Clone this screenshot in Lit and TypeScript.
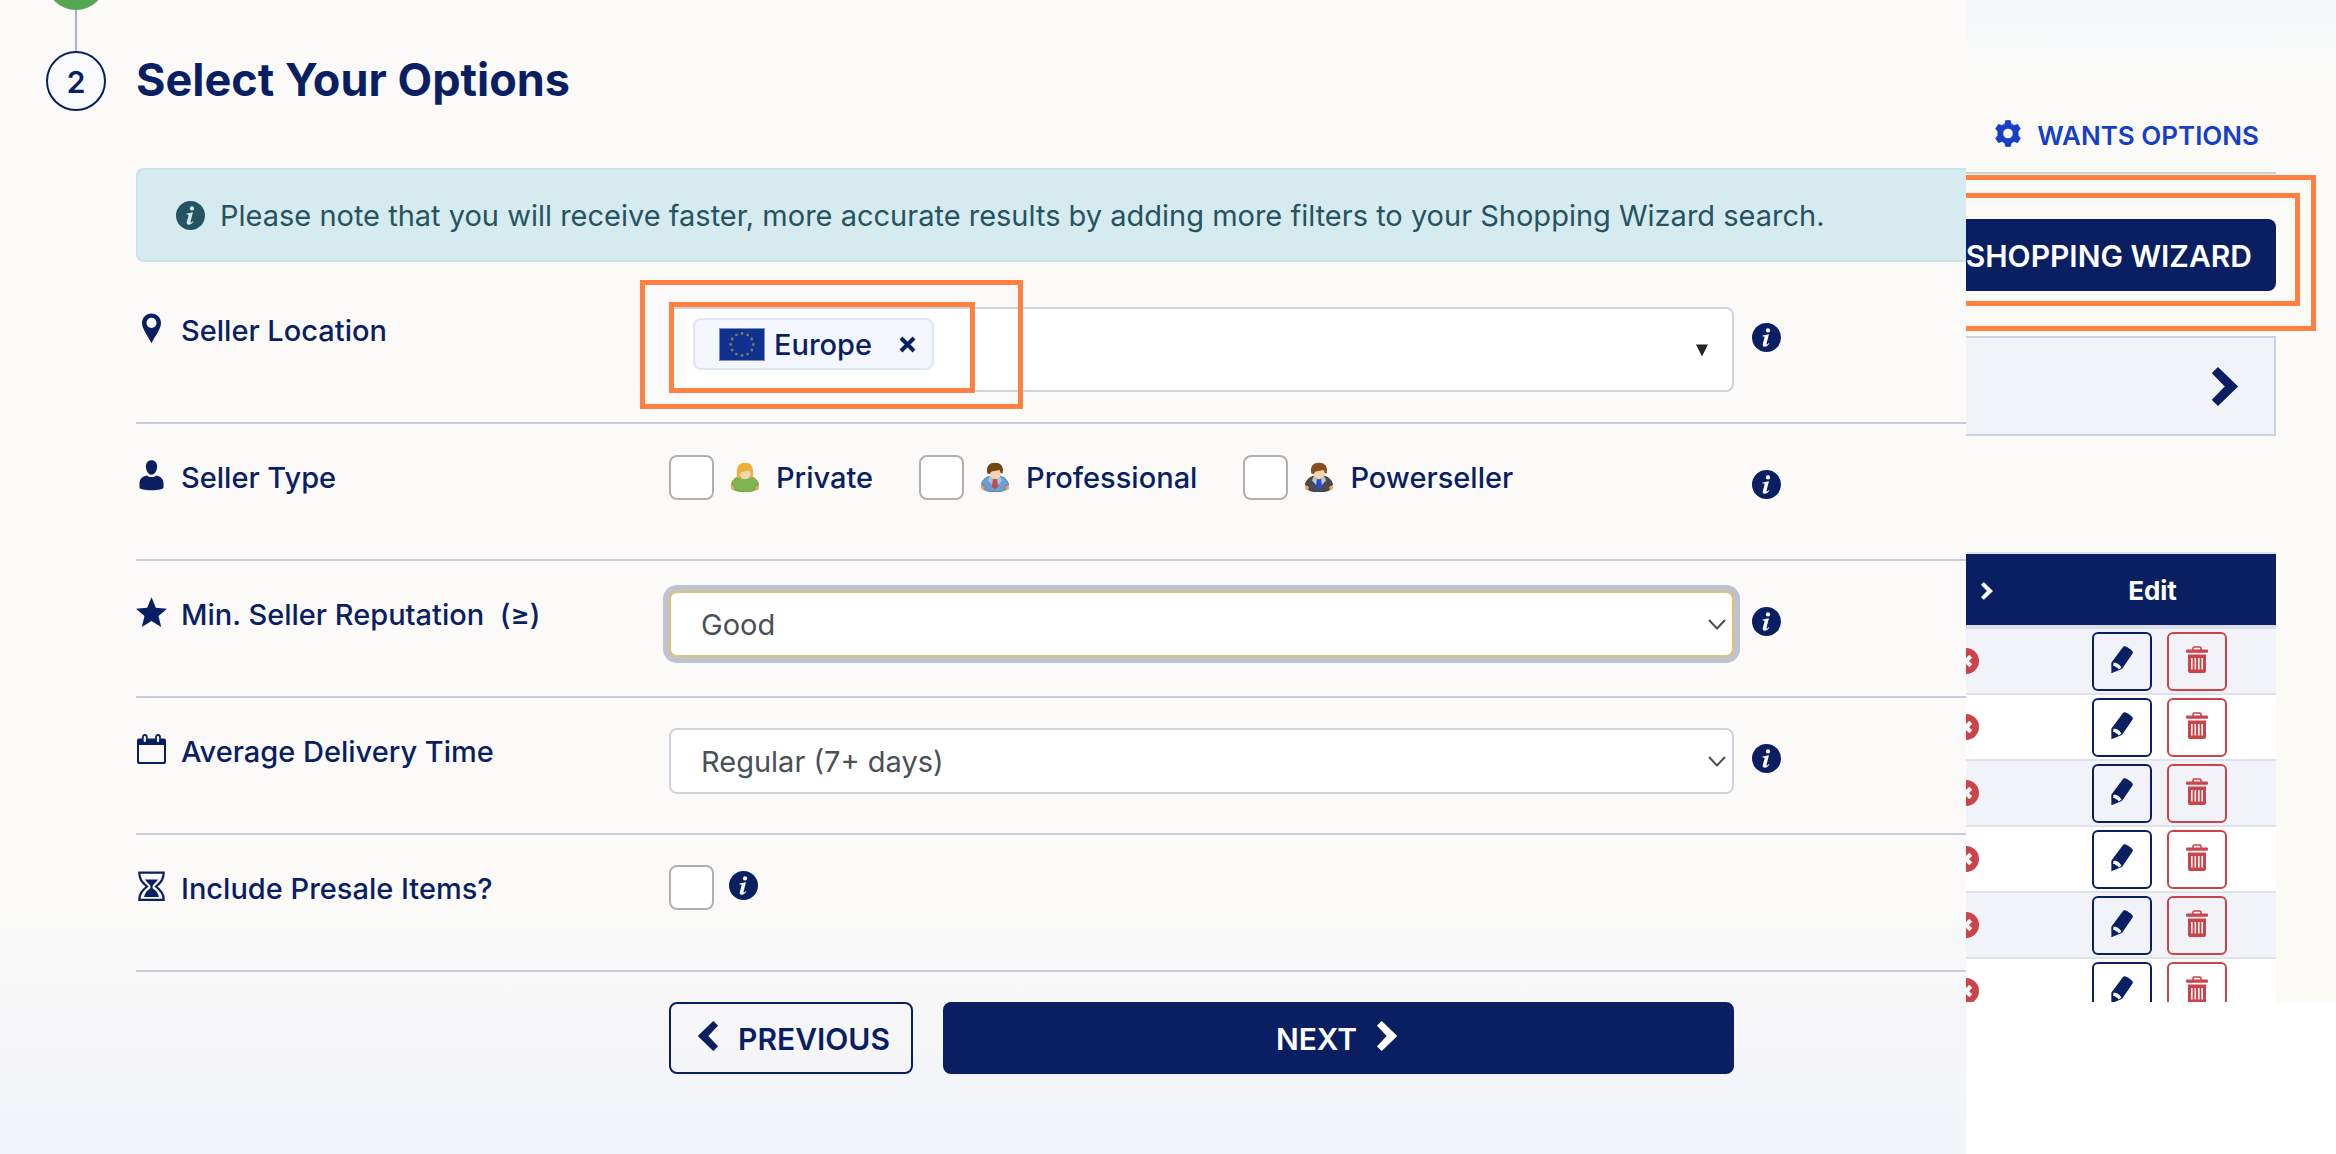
import { LitElement, html, svg, css, nothing } from "lit";
import { customElement, state } from "lit/decorators.js";

const NAVY = "#0a1f62";

const infoIcon = (size = 29) => html`<svg class="icon" width=${size} height=${size} viewBox="0 0 29 29" aria-hidden="true">
  <circle cx="14.5" cy="14.5" r="14.5" fill="currentColor"></circle>
  <circle cx="16" cy="7.4" r="2.1" fill="var(--hole, #fff)"></circle>
  <path d="M10.6 12.4c1.9-.2 3.8-.7 5.8-1.2l.5.4-2.4 9.1c-.2.8.1 1 .5.8.7-.4 1.2-.9 1.8-1.6l.6.5c-1.2 1.7-2.7 3.3-4.7 3.3-1.6 0-2.3-1.1-1.9-2.7l1.7-6.3c.2-.9 0-1.2-.8-1.2h-1.2z" fill="var(--hole, #fff)"></path>
</svg>`;

const chevron = (dir: "left" | "right", w: number, h: number) => html`<svg class="icon" width=${w} height=${h} viewBox="0 0 20 30" aria-hidden="true">
  <path d=${dir === "right" ? "M4.6 .8 L19.3 15 L4.6 29.2 L.7 25.3 L10.6 15 L.7 4.7 Z" : "M15.4 .8 L.7 15 L15.4 29.2 L19.3 25.3 L9.4 15 L19.3 4.7 Z"} fill="currentColor" stroke="currentColor" stroke-width="1.2" stroke-linejoin="round"></path>
</svg>`;

const rowIcons = {
  pin: html`<svg class="icon" width="31" height="31" viewBox="0 0 31 31" aria-hidden="true"><path fill-rule="evenodd" fill="currentColor" d="M15.500 .5c5.300 0 9.500 4.100 9.500 9.400 0 6.300-6.300 13.400-9.500 20.300C12.300 23.300 6 16.200 6 9.900 6 4.600 10.200 .5 15.500 .5zm0 4.300a5 5 0 1 0 0 10.100 5 5 0 0 0 0-10.100z"></path></svg>`,
  user: html`<svg class="icon" width="31" height="31" viewBox="0 0 31 31" aria-hidden="true"><path fill="currentColor" d="M15.500 .3c3.500 0 5.600 2.500 5.600 6.300 0 3.600-2.100 8.200-5.600 8.200S9.900 10.200 9.900 6.600C9.900 2.800 12 .3 15.500 .3z"></path><path fill="currentColor" d="M10.800 15.400c1.300 1 2.900 1.600 4.700 1.600s3.400-.6 4.700-1.600c4.700.9 7.300 3.500 7.300 8v4.100c0 1.700-5.400 2.700-12 2.700s-12-1-12-2.700v-4.100c0-4.500 2.600-7.100 7.300-8z"></path></svg>`,
  star: html`<svg class="icon" width="31" height="31" viewBox="0 0 31 31" aria-hidden="true"><path fill="currentColor" d="M15.500 .3l4.300 10.500 11.200.9-8.500 7.300 2.700 11-9.700-5.900-9.700 5.900 2.700-11L0 11.700l11.200-.9z"></path></svg>`,
  calendar: html`<svg class="icon" width="31" height="31" viewBox="0 0 31 31" aria-hidden="true"><path fill-rule="evenodd" fill="currentColor" d="M3 4.500h25a2 2 0 0 1 2 2V28a2 2 0 0 1-2 2H3a2 2 0 0 1-2-2V6.500a2 2 0 0 1 2-2zM3 11v16.300c0 .5.300.8.800.8h23.400c.5 0 .8-.3.800-.8V11z"></path><rect x="6.800" y="1" width="4" height="8" rx="2" fill="#fbfaf7" stroke="currentColor" stroke-width="1.800"></rect><rect x="20" y="1" width="4" height="8" rx="2" fill="#fbfaf7" stroke="currentColor" stroke-width="1.800"></rect></svg>`,
  hourglass: html`<svg class="icon" width="31" height="31" viewBox="0 0 31 31" aria-hidden="true"><path fill="none" stroke="currentColor" stroke-width="2.200" d="M3.300 1.600h24.400c0 6.500-2.500 9.500-7.700 13.900 5.200 4.400 7.700 7.400 7.700 13.400H3.300c0-6 2.500-9 7.700-13.400C5.800 11.100 3.300 8.100 3.300 1.600z"></path><path fill="currentColor" d="M9 8.500h13c-1 2-4.200 4.500-5.400 6.200v2.600c3.300 2.200 5.600 4.500 6.400 8.700H8c.8-4.200 3.100-6.500 6.400-8.700v-2.600C13.200 13 10 10.500 9 8.500z"></path></svg>`,
};

interface PersonLook { hair: string; body: string; edge: string; tie?: string; lapel?: string; long?: boolean }

const person = (p: PersonLook) => html`<svg class="icon" width="30" height="30" viewBox="0 0 30 30" aria-hidden="true">
  <path d="M4.500 18.500C1.500 20 .3 23.500 1 26c.6 2 2.500 2.800 4.500 2.500l2-5z" fill="#e9a765"></path>
  <path d="M25.500 18.500c3 1.500 4.200 5 3.500 7.500-.6 2-2.500 2.800-4.500 2.500l-2-5z" fill="#e9a765"></path>
  <path d="M9 14.500h12c4 1 6.800 4 7.500 8l-4 2 .8 3.200c-1.500 1.500-5.500 2-10.300 2s-8.800-.5-10.300-2l.8-3.200-4-2c.7-4 3.500-7 7.500-8z" fill=${p.body} stroke=${p.edge} stroke-width="1"></path>
  ${p.lapel ? svg`<path d="M9.500 14.500L15 19l5.500-4.500 1.500 4-4.500 5h-5l-4.500-5z" fill=${p.lapel}></path>` : nothing}
  ${p.tie ? svg`<path d="M13 16.500h4l1.200 8.500-3.200 2-3.200-2z" fill=${p.tie}></path>` : nothing}
  <ellipse cx="15" cy="11" rx="6.200" ry="6.200" fill="#f6d5ae"></ellipse>
  <path d=${p.long ? "M7 15.500C6 4 9 .8 15 .8s9 3.200 8 14.700l-2.700.5c.4-3.500 0-6-1.300-7.500l-7.500 1.500C10 11.500 9.500 13 9.700 16z" : "M7.300 11.500C6 4 9.300 .8 15 .8s9 3.200 7.700 10.700l-2-.5-1-3-8 1.500L9.500 12z"} fill=${p.hair}></path>
</svg>`;

const looks: Record<string, PersonLook> = {
  Private: { hair: "#eeb03c", body: "#7fb54e", edge: "#6fa045", long: true },
  Professional: { hair: "#744519", body: "#6d9ed3", edge: "#5581b5", tie: "#c64a45", lapel: "#a5c6ea" },
  Powerseller: { hair: "#8a4d1c", body: "#4a4b50", edge: "#38393e", tie: "#2450d8", lapel: "#c3c6cf" },
};

const euFlag = html`<svg class="icon" width="46" height="33" viewBox="0 0 46 33" aria-hidden="true">
  <rect width="46" height="33" fill="#7d8fc6"></rect>
  <rect x="1" y="1" width="44" height="31" fill="#11308f"></rect>
  ${Array.from({ length: 12 }, (_, i) => {
    const a = (i * Math.PI) / 6;
    return svg`<circle cx=${23 + 11.3 * Math.sin(a)} cy=${16.5 - 11 * Math.cos(a)} r="1.400" fill="#7b8057"></circle>`;
  })}
</svg>`;

const gear = html`<svg class="icon" width="26" height="27" viewBox="0 0 26 27" aria-hidden="true">
  <path fill-rule="evenodd" fill="currentColor" stroke="currentColor" stroke-width=".8" stroke-linejoin="round" d="M10.700 .6h4.600l.9 3.400 2.700 1.500 3.700-1.100 2.700 4.300-2.200 2.900v3.800l2.200 2.900-2.700 4.300-3.700-1.100-2.700 1.500-.9 3.400h-4.600l-.9-3.400-2.700-1.500-3.700 1.100L.7 18.300l2.200-2.900v-3.800L.7 8.700l2.700-4.300 3.700 1.100L9.800 4zM13 8.300a5.200 5.200 0 1 0 0 10.400 5.200 5.200 0 0 0 0-10.400z"></path>
</svg>`;

const pencil = html`<svg class="icon" width="22" height="28" viewBox="0 0 22 28" aria-hidden="true">
  <path fill="currentColor" d="M11.800 1.200c.7-1 1.700-1.200 2.800-.7 2.600 1 4.800 2.500 6.600 4.500.8.900.9 1.800.2 2.800L11.500 22.300c-.3.500-.8.800-1.300 1L.4 27.300 .3 17.500c0-.6.2-1 .5-1.500z"></path>
  <path fill="var(--cell, #fff)" d="M2.400 16.700c3.400-.5 6.900 1.900 8 5.100l-2.900 1.700c-.4-1.500-1-1.900-2.300-1.900-.5-1.200-1.500-1.800-3-1.700z"></path>
</svg>`;

const trash = html`<svg class="icon" width="22" height="27" viewBox="0 0 22 27" aria-hidden="true">
  <path fill="none" stroke="currentColor" stroke-width="1.600" d="M7 4V2.200c0-.8.400-1.200 1.200-1.200h5.600c.8 0 1.200.4 1.200 1.200V4"></path>
  <rect x="0" y="3.500" width="22" height="3.300" rx="1" fill="currentColor"></rect>
  <path fill-rule="evenodd" fill="currentColor" d="M2 8.500h18V25a2 2 0 0 1-2 2H4a2 2 0 0 1-2-2zM5 12v11.500h1.600V12zm3.500 0v11.500h1.600V12zm3.500 0v11.500h1.600V12zm3.400 0v11.500H17V12z"></path>
</svg>`;

const crossBadge = html`<svg class="icon" width="26" height="26" viewBox="0 0 26 26" aria-hidden="true">
  <circle cx="13" cy="13" r="13" fill="#cb444a"></circle>
  <path d="M8.200 8.200l9.600 9.600M17.800 8.200l-9.600 9.600" stroke="var(--cell, #fff)" stroke-width="4.200"></path>
</svg>`;

@customElement("app-root")
export class AppRoot extends LitElement {
  @state() private regions = ["Europe"];

  static styles = css`
    :host {
      display: grid;
      grid-template-columns: minmax(0, 1fr) 370px;
      min-height: 100vh;
      background: #fff;
      color: #0a1f62;
      font-family: Inter, "Liberation Sans", sans-serif;
      font-size: 29px;
      line-height: 44px;
      overflow: hidden;
    }
    * { box-sizing: border-box; }
    h2, p { margin: 0; }
    button, select, input { font: inherit; color: inherit; margin: 0; }
    button { cursor: pointer; }
    a { color: inherit; text-decoration: none; }
    .icon { display: block; flex: none; }

    .wizard {
      display: grid;
      grid-template-columns: 60px minmax(0, 1fr);
      column-gap: 30px;
      padding-left: 46px;
      background: linear-gradient(#fbfaf8 0, #fbfaf8 76%, #f3f4f9 97%);
      overflow: hidden;
    }
    .steps { display: flex; flex-direction: column; align-items: center; }
    .done { width: 60px; height: 10px; overflow: hidden; display: flex; align-items: flex-end; }
    .done::after { content: ""; width: 60px; height: 60px; flex: none; border-radius: 50%; background: #55a651; }
    .track { width: 2px; height: 41px; background: #adb3bf; }
    .step {
      width: 60px; height: 60px; padding-top: 2px; border: 2px solid #0a1f62; border-radius: 50%;
      background: #f8f9fd; display: flex; align-items: center; justify-content: center;
      font-size: 30px; font-weight: 600;
    }
    h2 { padding-top: 50px; font-size: 45px; line-height: 60px; font-weight: 700; }
    .note {
      display: flex; align-items: center; gap: 15px;
      margin: 58px 0 15px; height: 94px; padding: 0 38px;
      border: 2px solid #c3e5eb; border-right: 0; border-radius: 8px 0 0 8px;
      background: #d6ebef; color: #255361; --hole: #d6ebef;
      white-space: nowrap;
    }
    .note p { padding-top: 2px; }
    .row {
      display: grid;
      grid-template-columns: 533fr 1065fr 232fr;
      align-items: start;
      min-height: 137px;
      padding-top: 30px;
      border-bottom: 2px solid #c9cddb;
    }
    .row.tall { min-height: 147px; }
    .label { display: flex; align-items: center; gap: 14px; font-weight: 500; white-space: pre; }
    .label span { padding-top: 2px; }
    .label .icon { margin-bottom: 4px; }
    .info { display: flex; padding: 16px 0 0 18px; background: none; border: 0; }
    .control { position: relative; min-width: 0; }

    .multi {
      display: flex; align-items: flex-start; justify-content: space-between;
      height: 85px; padding: 9px 24px 0 22px;
      border: 2px solid #ced2dc; border-radius: 8px; background: #fff;
    }
    .tag {
      display: flex; align-items: center; height: 52px; padding: 0 16px 0 24px; gap: 9px;
      border: 2px solid #dfe6fc; border-radius: 8px; background: #f4f6fe; font-weight: 500;
    }
    .tag span { padding-top: 2px; }
    .remove { display: flex; padding: 0; margin-left: 18px; background: none; border: 0; }
    .open { display: flex; padding: 26px 0 0; background: none; border: 0; }
    .mark { position: absolute; border: 5px solid #ff8040; pointer-events: none; }
    .mark.outer { left: -29px; top: -27px; width: 383px; height: 129px; }
    .mark.inner { left: 0; top: -5px; width: 306px; height: 91px; }

    .checks { display: flex; align-items: center; gap: 46px; font-weight: 500; }
    .check { display: flex; align-items: center; gap: 16px; }
    .check span { padding-top: 2px; }
    .box {
      appearance: none; display: block; width: 45px; height: 45px; flex: none;
      border: 2px solid #b0b0b0; border-radius: 8px; background: #fff;
    }
    .checks .info { padding: 0; margin: -4px 0 0 -31px; }

    .select { position: relative; display: flex; align-items: center; }
    .select select {
      appearance: none; width: 100%; height: 66px; padding: 2px 60px 0 30px;
      border: 2px solid #ced4da; border-radius: 8px; background: #fff; color: #495057;
      outline: 0;
    }
    .select.active select { border-color: #dcc56f; box-shadow: 0 0 0 6px #bfc2d1; }
    .select .icon { position: absolute; right: 8px; pointer-events: none; }

    .actions {
      display: grid; grid-template-columns: 533fr 1065fr 232fr; padding: 30px 0 80px;
    }
    .buttons { grid-column: 2; display: flex; gap: 30px; }
    .btn {
      display: flex; align-items: center; justify-content: center; gap: 20px;
      height: 72px; border: 2px solid #0a1f62; border-radius: 8px;
      background: #0a1f62; color: #fff; font-size: 30px; font-weight: 600; white-space: nowrap;
    }
    .btn span { padding-top: 2px; }
    .btn .icon { margin-bottom: 4px; }
    .btn.ghost { width: 244px; padding: 0 20px 0 26px; background: transparent; color: #0a1f62; }
    .btn.grow { flex: 1; padding: 0 10px 0 6px; }

    .side {
      position: relative; height: calc(100vh - 152px); overflow: hidden;
      background: linear-gradient(#f4f6fa 0, #f8f9f9 50px, #fbfaf7 95px);
    }
    .inner-side { width: 310px; display: flex; flex-direction: column; }
    .wants {
      display: flex; align-items: flex-start; justify-content: flex-end; gap: 16px;
      height: 174px; padding: 98px 17px 0 0; border-bottom: 2px solid #c9cddb;
      color: #173fc6; font-size: 26px; font-weight: 600; white-space: nowrap;
      line-height: 40px;
    }
    .wants .icon { margin-top: 22px; }
    .wants span { margin-top: 18px; }
    .side .btn { margin-top: 45px; justify-content: flex-end; padding: 0 22px 0 0; border-radius: 0 8px 8px 0; border-left: 0; }
    .panel {
      display: flex; align-items: center; justify-content: flex-end;
      height: 100px; margin: 45px 0 116px; padding-right: 36px;
      border: 2px solid #cdd2e0; border-left: 0; background: #f2f3f8; color: #0a1f62;
      border-radius: 0;
    }
    .frame { position: absolute; left: -5px; border: 5px solid #ff8040; pointer-events: none; }
    .frame.a { top: 175px; right: 20px; height: 156px; }
    .frame.b { top: 193px; right: 36px; height: 113px; }

    table { width: 100%; border-collapse: separate; border-spacing: 0; table-layout: fixed; }
    th, td { padding: 0; }
    th {
      height: 77px; padding-top: 2px; border-top: 2px solid #dfe1e8; border-bottom: 4px solid #dcdee6;
      background: #0a1f62; color: #fff; font-size: 26px; font-weight: 700; text-align: center;
    }
    .status { width: 63px; }
    th .icon { margin-left: 15px; }
    td { height: 66px; border-bottom: 2px solid #dfe2e8; background: var(--cell); }
    tr { --cell: #fff; }
    tbody tr:nth-child(odd) { --cell: #f2f3f8; }
    td .icon { margin-left: -13px; }
    .tools { display: flex; gap: 15px; padding: 3px 0 2px 63px; }
    .tool {
      display: flex; align-items: center; justify-content: center;
      width: 60px; height: 59px; padding: 0 0 4px; border: 2px solid currentColor; border-radius: 6px;
      background: transparent;
    }
    .tool .icon { margin: 0; }
    .tool.del { color: #cb444a; }
  `;

  private info(topic: string) {
    return html`<button class="info" type="button" aria-label="About ${topic}">${infoIcon()}</button>`;
  }

  private select(id: string, value: string, active = false) {
    return html`<div class="control select ${active ? "active" : ""}">
      <select id=${id}><option>${value}</option></select>
      <svg class="icon" width="18" height="11" viewBox="0 0 18 11" aria-hidden="true"><path d="M1 1l8 8.500L17 1" fill="none" stroke="#4a4f55" stroke-width="2"></path></svg>
    </div>`;
  }

  render() {
    return html`
      <main class="wizard">
        <div class="steps"><div class="done"></div><div class="track"></div><div class="step">2</div></div>
        <section>
          <h2>Select Your Options</h2>
          <div class="note">${infoIcon()}<p>Please note that you will receive faster, more accurate results by adding more filters to your Shopping Wizard search.</p></div>

          <div class="row tall">
            <div class="label">${rowIcons.pin}<span>Seller Location</span></div>
            <div class="control">
              <div class="multi">
                ${this.regions.map((r) => html`<div class="tag">${euFlag}<span>${r}</span>
                  <button class="remove" type="button" aria-label="Remove ${r}" @click=${() => (this.regions = this.regions.filter((x) => x !== r))}>
                    <svg class="icon" width="17" height="17" viewBox="0 0 17 17" aria-hidden="true"><path d="M2 2l13 13M15 2L2 15" stroke=${NAVY} stroke-width="4"></path></svg>
                  </button></div>`)}
                <button class="open" type="button" aria-label="Show locations"><svg class="icon" width="12" height="13" viewBox="0 0 12 13" aria-hidden="true"><path d="M0 .5h12L6 12.500z" fill="#212529"></path></svg></button>
              </div>
              <div class="mark outer"></div>
              <div class="mark inner"></div>
            </div>
            ${this.info("seller location")}
          </div>

          <div class="row">
            <div class="label">${rowIcons.user}<span>Seller Type</span></div>
            <div class="checks">
              ${Object.entries(looks).map(([name, look]) => html`<label class="check"><input class="box" type="checkbox">${person(look)}<span>${name}</span></label>`)}
            </div>
            ${this.info("seller type")}
          </div>

          <div class="row">
            <label class="label" for="reputation">${rowIcons.star}<span>Min. Seller Reputation  (≥)</span></label>
            ${this.select("reputation", "Good", true)}
            ${this.info("seller reputation")}
          </div>

          <div class="row">
            <label class="label" for="delivery">${rowIcons.calendar}<span>Average Delivery Time</span></label>
            ${this.select("delivery", "Regular (7+ days)")}
            ${this.info("delivery time")}
          </div>

          <div class="row">
            <label class="label" for="presale">${rowIcons.hourglass}<span>Include Presale Items?</span></label>
            <div class="checks"><input class="box" id="presale" type="checkbox">${this.info("presale items")}</div>
          </div>

          <div class="actions">
            <div class="buttons">
              <button class="btn ghost" type="button">${chevron("left", 20, 30)}<span>PREVIOUS</span></button>
              <button class="btn grow" type="button"><span>NEXT</span>${chevron("right", 20, 30)}</button>
            </div>
          </div>
        </section>
      </main>

      <aside class="side">
        <div class="inner-side">
          <a class="wants" href="#options">${gear}<span>WANTS OPTIONS</span></a>
          <button class="btn" type="button"><span>SHOPPING WIZARD</span></button>
          <button class="panel" type="button" aria-label="Expand">${chevron("right", 26, 39)}</button>
          <table>
            <thead><tr><th class="status" aria-label="Status">${chevron("right", 12, 18)}</th><th>Edit</th></tr></thead>
            <tbody>
              ${Array.from({ length: 6 }, () => html`<tr>
                <td>${crossBadge}</td>
                <td><div class="tools">
                  <button class="tool" type="button" aria-label="Edit">${pencil}</button>
                  <button class="tool del" type="button" aria-label="Delete">${trash}</button>
                </div></td>
              </tr>`)}
            </tbody>
          </table>
        </div>
        <div class="frame a"></div>
        <div class="frame b"></div>
      </aside>
    `;
  }
}
